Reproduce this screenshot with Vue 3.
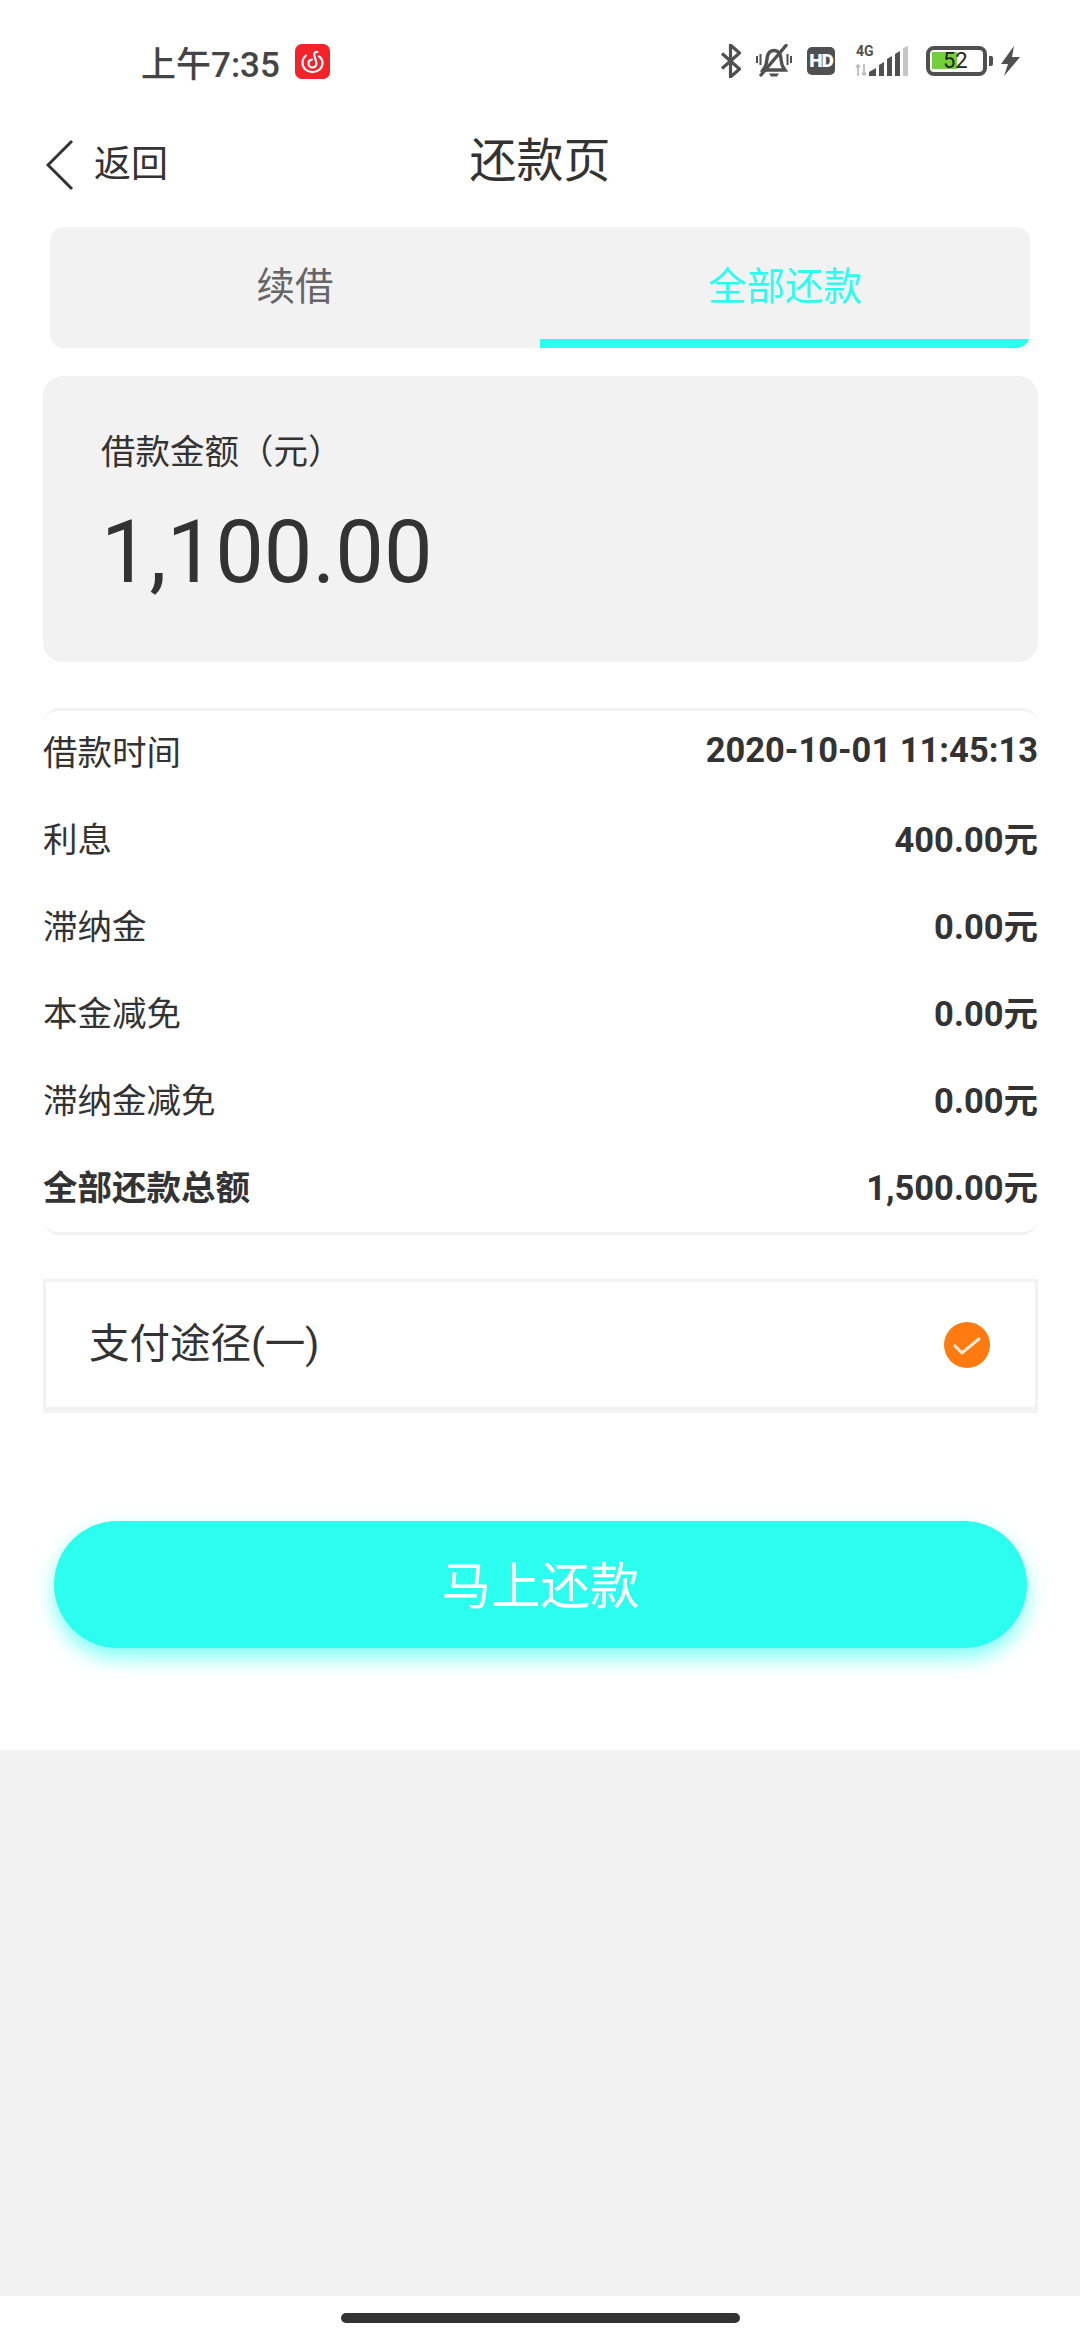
<script setup>
import { ref } from 'vue'

const tabs = ['续借', '全部还款']
const activeTab = ref(1)

const rows = [
  { label: '借款时间', value: '2020-10-01 11:45:13' },
  { label: '利息', value: '400.00元' },
  { label: '滞纳金', value: '0.00元' },
  { label: '本金减免', value: '0.00元' },
  { label: '滞纳金减免', value: '0.00元' },
  { label: '全部还款总额', value: '1,500.00元', total: true }
]
</script>

<template>
  <div class="page">
    <div class="main">
      <div class="status">
        <span class="clock">上午7:35</span>
        <svg class="app-icon" width="35" height="35" viewBox="0 0 35 35">
          <rect width="35" height="35" rx="7" fill="#f5222a" />
          <path d="M22.500 8c-2.200-.6-3.800 1.200-3.200 3.200l2 7.300c.7 2.700-1.300 5-3.800 5-2.300 0-4-1.800-4-4 0-2 1.500-3.700 3.500-4" fill="none" stroke="#fff" stroke-width="2.200" stroke-linecap="round" />
          <path d="M11 11.500C8.800 13.200 7.500 16 7.500 19c0 5.200 4.400 9.200 10 9.200s10-4 10-9.200c0-2.700-1.200-5-3.500-6.700" fill="none" stroke="#fff" stroke-width="2.200" stroke-linecap="round" />
        </svg>
        <div class="status-right">
          <svg width="22" height="34" viewBox="0 0 22 34">
            <path d="M2 9.500 19.500 25 10.500 33V1l9 8L2 24.500" fill="none" stroke="#505050" stroke-width="3.200" stroke-linejoin="round" />
          </svg>
          <svg class="bell" width="36" height="34" viewBox="0 0 36 34">
            <path d="M9 23c2-3 1.500-7 2.500-11 1-3.500 3.500-5.500 6.500-5.500s5.500 2 6.500 5.500c1 4 .5 8 2.500 11l2 3H7z" fill="none" stroke="#505050" stroke-width="3.400" />
            <path d="M13 29.500h10l-2 3h-6z" fill="#505050" />
            <path d="M5 31 30 1.500" stroke="#505050" stroke-width="3.400" stroke-linecap="round" />
            <path d="M1 12v7M4.500 10v11M31.500 10v11M35 12v7" stroke="#505050" stroke-width="2" />
          </svg>
          <span class="hd">HD</span>
          <div class="net">
            <span class="net-label">4G</span>
            <svg width="54" height="30" viewBox="0 0 54 30">
              <path d="M3 19v11M1 21l2-2 2 2M9 18v11M7 27l2 2 2-2" stroke="#bdbdbd" stroke-width="1.800" fill="none" />
              <path d="M14 30v-4l7-4v8zM24 30V19l5-3v14zM32 30V13l5-3v20zM40 30V8l5-3v25z" fill="#505050" />
              <path d="M48 30V2l5-2v30z" fill="#c6c6c6" />
            </svg>
          </div>
          <div class="battery">
            <div class="battery-body">
              <div class="battery-fill"></div>
              <span class="battery-num">52</span>
            </div>
            <div class="battery-nub"></div>
          </div>
          <svg class="bolt" width="19" height="30" viewBox="0 0 19 30">
            <path d="M13 0 0 18h7L3 30l16-19h-8z" fill="#505050" />
          </svg>
        </div>
      </div>

      <div class="nav">
        <div class="back">
          <svg width="28" height="52" viewBox="0 0 28 52">
            <path d="M26 2 2 26l24 24" fill="none" stroke="#333" stroke-width="3" />
          </svg>
          <span>返回</span>
        </div>
        <div class="title">还款页</div>
      </div>

      <div class="tabs">
        <div
          v-for="(tab, i) in tabs"
          :key="tab"
          class="tab"
          :class="{ active: activeTab === i }"
          @click="activeTab = i"
        >
          {{ tab }}
        </div>
      </div>

      <div class="amount-card">
        <div class="amount-label">借款金额（元）</div>
        <div class="amount">1,100.00</div>
      </div>

      <div class="detail">
        <div v-for="row in rows" :key="row.label" class="row" :class="{ total: row.total }">
          <span>{{ row.label }}</span>
          <span class="value">{{ row.value }}</span>
        </div>
      </div>

      <div class="pay">
        <span class="pay-name">支付途径(一)</span>
        <svg width="46" height="46" viewBox="0 0 46 46">
          <circle cx="23" cy="23" r="23" fill="#ff7a10" />
          <path d="M10 23l8 8 18-15" fill="none" stroke="#ffe9d6" stroke-width="3" />
        </svg>
      </div>

      <button class="submit">马上还款</button>
    </div>

    <div class="rest"></div>
    <div class="home"><div class="home-bar"></div></div>
  </div>
</template>

<style scoped>
.page {
  width: 1080px;
  height: 2340px;
  display: flex;
  flex-direction: column;
  background: #fff;
  color: #333;
  font-family: Roboto, "Noto Sans CJK SC", sans-serif;
}
.main {
  height: 1750px;
  flex: none;
  display: flex;
  flex-direction: column;
}
.status {
  height: 80px;
  padding: 42px 60px 0 141px;
  box-sizing: border-box;
  display: flex;
  align-items: center;
  flex: none;
}
.clock {
  font-size: 35px;
  font-weight: 500;
  color: #444;
  width: 154px;
}
.status-right {
  margin-left: auto;
  display: flex;
  align-items: center;
}
.bell {
  margin-left: 14px;
}
.hd {
  width: 28px;
  height: 28px;
  margin-left: 15px;
  background: #505050;
  color: #fff;
  border-radius: 5px;
  font-size: 19px;
  font-weight: 900;
  line-height: 28px;
  text-align: center;
  letter-spacing: -1px;
}
.net {
  position: relative;
  margin-left: 20px;
}
.net svg {
  display: block;
}
.net-label {
  position: absolute;
  left: 1px;
  top: -3px;
  font-size: 14px;
  font-weight: 700;
  line-height: 16px;
  color: #505050;
}
.battery {
  display: flex;
  align-items: center;
  margin-left: 17px;
}
.battery-body {
  position: relative;
  width: 61px;
  height: 30px;
  box-sizing: border-box;
  border: 4px solid #505050;
  border-radius: 8px;
}
.battery-fill {
  position: absolute;
  left: 2px;
  top: 2px;
  bottom: 3px;
  width: 25px;
  background: #74cf3c;
}
.battery-num {
  position: absolute;
  left: 13px;
  top: -3px;
  font-size: 22px;
  line-height: 28px;
  color: #222;
}
.battery-nub {
  width: 4px;
  height: 10px;
  margin-left: 2px;
  background: #505050;
  border-radius: 0 2px 2px 0;
}
.bolt {
  margin-left: 8px;
}
.nav {
  height: 147px;
  flex: none;
  padding: 0 46px;
  display: grid;
  grid-template-columns: 1fr auto 1fr;
  align-items: start;
}
.back {
  display: flex;
  align-items: center;
  gap: 20px;
  margin-top: 59px;
  font-size: 37px;
  line-height: 52px;
}
.title {
  font-size: 47px;
  line-height: 62px;
  margin-top: 50px;
}
.tabs {
  height: 121px;
  flex: none;
  margin: 0 50px;
  display: flex;
  background: #f2f2f2;
  border-radius: 14px;
  overflow: hidden;
}
.tab {
  flex: 1;
  display: flex;
  align-items: center;
  justify-content: center;
  font-size: 38.5px;
  color: #666;
  padding-bottom: 10px;
  box-sizing: border-box;
}
.tab.active {
  color: #2bfeee;
  border-bottom: 9px solid #2bfeee;
  padding-bottom: 1px;
}
.amount-card {
  height: 286px;
  flex: none;
  margin: 28px 42px 0 43px;
  padding: 52px 58px 0;
  box-sizing: border-box;
  background: #f2f2f2;
  border-radius: 20px;
}
.amount-label {
  font-size: 34.5px;
  line-height: 48px;
}
.amount {
  font-size: 86.5px;
  line-height: 100px;
  margin-top: 27px;
}
.detail {
  height: 527px;
  flex: none;
  box-sizing: border-box;
  margin: 46px 42px 0 43px;
  border-top: 3px solid #f2f2f2;
  border-bottom: 3px solid #f2f2f2;
  border-radius: 16px;
}
.row {
  height: 87px;
  box-sizing: border-box;
  padding-bottom: 10px;
  display: flex;
  align-items: center;
  justify-content: space-between;
  font-size: 34.5px;
}
.value {
  font-weight: 700;
}
.total {
  font-weight: 700;
}
.pay {
  height: 134px;
  flex: none;
  box-sizing: border-box;
  margin: 44px 42px 0 43px;
  padding: 0 45px 0 43px;
  border: 3px solid #f2f2f2;
  border-bottom-width: 6px;
  display: flex;
  align-items: center;
  justify-content: space-between;
  font-size: 40.5px;
}
.pay-name {
  margin-bottom: 9px;
}
.submit {
  height: 127px;
  flex: none;
  margin: 108px 53px 0 54px;
  padding: 0 0 4px;
  border: 0;
  border-radius: 64px;
  background: #2bfeee;
  color: #fff;
  font-family: inherit;
  font-size: 49.5px;
  box-shadow: 0 10px 20px rgba(43, 254, 238, 0.6);
}
.rest {
  flex: 1;
  background: #f2f2f2;
}
.home {
  height: 44px;
  flex: none;
  display: flex;
  justify-content: center;
  padding-top: 17px;
  box-sizing: border-box;
}
.home-bar {
  width: 399px;
  height: 10px;
  background: #333;
  border-radius: 5px;
}
</style>
